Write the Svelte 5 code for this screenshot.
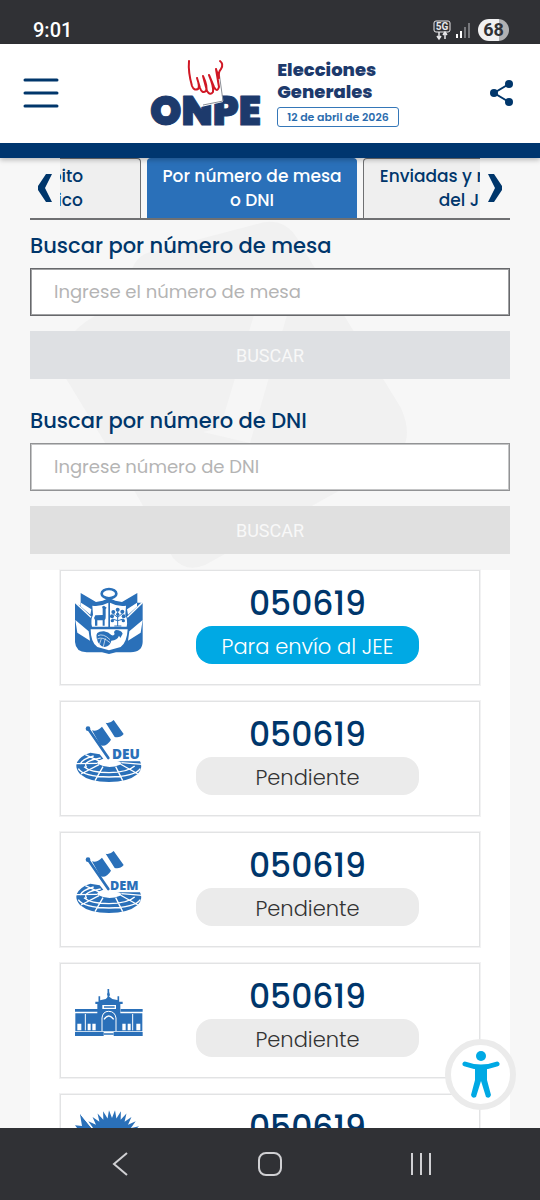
<script>
	let mesa = $state("");
	let dni = $state("");
	let scroll = $state(129);
	let active = $state(1);

	const tabs = [
		["Por ámbito", "geográfico"],
		["Por número de mesa", "o DNI"],
		["Enviadas y recibidas", "del JEE"]
	];

	const actas = [
		{ numero: "050619", estado: "Para envío al JEE", icon: "escudo", enviada: true },
		{ numero: "050619", estado: "Pendiente", icon: "DEU" },
		{ numero: "050619", estado: "Pendiente", icon: "DEM" },
		{ numero: "050619", estado: "Pendiente", icon: "congreso" },
		{ numero: "050619", estado: "Pendiente", icon: "parlamento" }
	];

	// points of the sun, as x,y pairs round a half circle
	const rays = Array.from({ length: 33 }, (_, i) => {
		const angle = Math.PI + (i * Math.PI) / 32;
		const r = i % 2 ? 92 : 68;
		return `${336 + r * Math.cos(angle)},${362 + r * Math.sin(angle)}`;
	}).join(" ");

	function move(step) {
		scroll = Math.max(0, Math.min(222, scroll + step));
	}
</script>

{#snippet escudo()}
	<svg class="emblem" viewBox="45 48 204 204" aria-hidden="true">
		<ellipse cx="147" cy="71" rx="22" ry="14" fill="none" stroke="#2a70b9" stroke-width="8" />
		<path d="M62 69 L108 96 L128 92 L147 84 L166 92 L186 96 L232 69 V98 L248 98 V216 Q247 246 212 247 H168 L147 252 L126 247 H80 Q47 246 45 216 V98 L62 108 Z" fill="#2a70b9" />
		<path d="M63 98 L94 118 L91 134 L63 110 Z M46 150 L86 184 L90 212 L52 188 Z M231 98 L201 118 L204 134 L231 110 Z M248 150 L208 184 L204 212 L242 188 Z" fill="#fff" />
		<path d="M45 97 L93 142 M248 97 L202 142" stroke="#fff" stroke-width="4" />
		<path d="M97 107 Q120 111 145 98 V170 H96 Q91 150 99 134 Z M150 98 Q174 111 198 107 L196 134 Q204 150 200 170 H150 Z M92 178 H203 Q201 218 182 231 L147 241 L112 231 Q92 218 92 178 Z" fill="#fff" />
		<path d="M126 110 L132 107 L140 113 L137 117 V142 Q137 148 134 150 V167 H128 V151 H112 V167 H105 V150 Q100 143 106 136 L128 135 V116 Z" fill="#2a70b9" />
		<path d="M173 124 V168 M173 142 L160 132 M173 142 L188 130 M173 152 L157 147 M173 152 L190 147 M163 168 H184" stroke="#2a70b9" stroke-width="3" />
		<g fill="#2a70b9">
			<circle cx="173" cy="119" r="6" /><circle cx="160" cy="126" r="6" /><circle cx="187" cy="125" r="6" />
			<circle cx="156" cy="139" r="6" /><circle cx="191" cy="139" r="6" /><circle cx="157" cy="152" r="5" />
			<circle cx="190" cy="152" r="5" /><circle cx="173" cy="133" r="5" />
			<path d="M110 205 Q104 183 132 184 Q146 186 154 195 Q161 199 164 192 Q159 184 168 180 Q184 180 188 191 L181 204 L177 197 Q172 211 154 212 Q151 228 134 231 Q115 229 110 205 Z" />
		</g>
		<path d="M114 197 Q130 189 150 209 M112 207 Q127 198 150 218 M124 206 L118 224 M136 205 L130 230" fill="none" stroke="#fff" stroke-width="2" />
	</svg>
{/snippet}

{#snippet senado(label)}
	<svg class="emblem" viewBox="45 51 204 204" aria-hidden="true">
		<path d="M85 87 L145 174" stroke="#2a70b9" stroke-width="8" stroke-linecap="round" />
		<circle cx="84" cy="86" r="7" fill="#2a70b9" />
		<path d="M96 91 Q110 96 126 80 L153 119 Q139 142 121 136 Z M137 68 Q149 72 161 60 L191 102 Q180 115 164 111 Z" fill="#2a70b9" />
		<text x={label === "DEM" ? 150 : 156} y="178" font-size={label === "DEM" ? 38 : 41}>{label}</text>
		<path d="M91 158 L119 163 L130 176 Q105 184 114 192 Q146 209 180 194 Q190 186 171 184 H240 Q250 205 233 222 Q204 246 147 246 Q88 246 60 222 Q32 189 75 164 Z" fill="#2a70b9" />
		<path d="M60 193 Q65 178 101 168 M80 202 Q65 184 122 174 M55 206 Q70 230 147 231 Q224 230 241 206 M72 200 Q91 217 147 218 Q203 217 224 198 M76 164 L120 184 M47 191 L112 190 M63 222 L117 194 M105 242 L129 200 M188 242 L167 200 M234 222 L181 192 M246 193 L184 188" fill="none" stroke="#fff" stroke-width="4" />
	</svg>
{/snippet}

{#snippet congreso()}
	<svg class="emblem" viewBox="45 27 204 204" aria-hidden="true">
		<path d="M145 57 V84 M118 79 V125 M175 79 V125" stroke="#2a70b9" stroke-width="5" />
		<path d="M141 72 L147 65 L150 76 L145 80 Z M120 91 L137 87 L146 79 L157 87 L175 91 V101 H120 Z M106 95 H188 V102 H106 Z M112 101 H181 V130 H112 Z M45 117 H112 V125 H45 Z M182 117 H248 V125 H182 Z M46 130 H247 V184 H46 Z M45 186 H248 V198 H45 Z" fill="#2a70b9" />
		<path d="M127 105 H168 V117 H127 Z M52 161 H64 V181 H52 Z M83 161 H92 V181 H83 Z M97 161 H107 V181 H97 Z M187 161 H197 V181 H187 Z M203 161 H212 V181 H203 Z M229 161 H241 V181 H229 Z M131 186 H161 V198 H131 Z" fill="#fff" />
		<path d="M132 111 H164 M131 192 H161" stroke="#2a70b9" stroke-width="4" />
		<path d="M76 132 V181 M218 132 V181 M126 183 V144 Q128 124 146 124 Q165 124 168 144 V183" fill="none" stroke="#fff" stroke-width="3" />
		<path d="M132 148 Q146 128 161 148" fill="none" stroke="#fff" stroke-width="4" />
		<path d="M134 156 Q147 142 160 156 V182 H134 Z" fill="#2a70b9" />
	</svg>
{/snippet}

{#snippet parlamento()}
	<svg class="emblem" viewBox="225 270 204 204" aria-hidden="true">
		<polygon points={rays} fill="#2a70b9" />
		<path d="M240 282 L276 326 L254 350 L226 340 L238 333 L225 316 L246 318 Z" fill="#2a70b9" />
		<path d="M244 285 L284 334" stroke="#fff" stroke-width="3" />
		<path d="M258 360 H402 L370 440 H290 Z" fill="#2a70b9" />
	</svg>
{/snippet}

<div class="phone">
	<div class="status">
		<span class="clock">9:01</span>
		<div class="signals">
			<svg width="18" height="22" viewBox="0 0 18 22" aria-hidden="true">
				<rect x="1" y="2" width="16" height="11" rx="2" fill="none" stroke="#e8e8ea" stroke-width="1" />
				<text x="9" y="11" font-size="10" text-anchor="middle">5G</text>
				<path d="M6 13 V19 M4 17 L6 20 L8 17 M12 20 V14 M10 16 L12 13 L14 16" fill="none" stroke="#e8e8ea" stroke-width="1.5" />
			</svg>
			<svg width="15" height="16" viewBox="0 0 15 16" aria-hidden="true">
				<path d="M1 12 V16 M5 9 V16" stroke="#fff" stroke-width="2" />
				<path d="M9 5 V16 M13 1 V16" stroke="#77787c" stroke-width="2" />
			</svg>
			<span class="battery">68</span>
		</div>
	</div>

	<header>
		<button class="plain" aria-label="Menú">
			<svg width="36" height="30" viewBox="0 0 36 30">
				<path d="M2 2 H34 M2 15 H34 M2 28 H34" stroke="#00366b" stroke-width="3" stroke-linecap="round" />
			</svg>
		</button>
		<div class="brand">
			<svg width="112" height="70" viewBox="0 0 112 70" role="img" aria-label="ONPE">
				<text class="onpe" x="0" y="67" font-size="40">ONPE</text>
				<path d="M47 30 L68 13 L73 44 L51 49 L49 38 Z" fill="#fff" />
				<path d="M69 14 L73 43 L53 47" fill="none" stroke="#8c8f96" stroke-width="1" />
				<path d="M39 3 Q38 14 42 28 Q44 33 48 31 Q50 29 47 20 L50 30 Q52 36 56 33 Q58 29 53 18 L57 33 Q60 38 63 34 Q64 29 59 17 L64 29 Q67 35 69 29 L66 11 L69 20 Q68 14 71 11 Q74 6 70 3" fill="#fff" stroke="#d01825" stroke-width="2" stroke-linecap="round" stroke-linejoin="round" />
			</svg>
			<div class="event">
				<span class="title">Elecciones<br />Generales</span>
				<span class="date">12 de abril de 2026</span>
			</div>
		</div>
		<button class="plain" aria-label="Compartir">
			<svg width="24" height="26" viewBox="0 0 24 26">
				<path d="M19 4 L4 13 L19 22" fill="none" stroke="#00366b" stroke-width="2" />
				<g fill="#00366b"><circle cx="19" cy="4" r="4" /><circle cx="4" cy="13" r="4" /><circle cx="19" cy="22" r="4" /></g>
			</svg>
		</button>
	</header>

	<main>
		<svg class="watermark" width="360" height="360" viewBox="55 215 360 360" aria-hidden="true">
			<path d="M147 253 L257 224 Q283 216 297 238 L313 265 L401 408 Q413 436 401 450 L337 492 L205 565 Q186 573 173 558 L135 492 L62 372 Q55 340 93 317 L118 303 L133 267 Q137 257 147 253 Z" fill="#f1f1f1" />
			<path d="M254 315 H287 L250 443 L203 432 L220 428 Z" fill="#f6f6f6" />
		</svg>

		<nav class="carousel">
			<button class="arrow" aria-label="Anterior" onclick={() => move(-111)}>
				<svg width="14" height="28" viewBox="0 0 14 28"><path d="M8 0 H14 L7 14 L14 28 H8 L0 16 V12 Z" fill="#00366b" /></svg>
			</button>
			<div class="window">
				<div class="tabs" style:transform="translateX({-scroll}px)">
					{#each tabs as tab, i}
						<button class="tab" class:active={active === i} onclick={() => (active = i)}>{tab[0]}<br />{tab[1]}</button>
					{/each}
				</div>
			</div>
			<button class="arrow" aria-label="Siguiente" onclick={() => move(111)}>
				<svg width="14" height="28" viewBox="0 0 14 28"><path d="M6 0 H0 L7 14 L0 28 H6 L14 16 V12 Z" fill="#00366b" /></svg>
			</button>
		</nav>

		<form onsubmit={(e) => e.preventDefault()}>
			<label for="mesa">Buscar por número de mesa</label>
			<input id="mesa" class="focus" placeholder="Ingrese el número de mesa" bind:value={mesa} />
			<button class="search blue">BUSCAR</button>
		</form>
		<form onsubmit={(e) => e.preventDefault()}>
			<label for="dni">Buscar por número de DNI</label>
			<input id="dni" placeholder="Ingrese número de DNI" bind:value={dni} />
			<button class="search">BUSCAR</button>
		</form>

		<section class="results">
			{#each actas as acta}
				<article>
					{#if acta.icon === "escudo"}
						{@render escudo()}
					{:else if acta.icon === "congreso"}
						{@render congreso()}
					{:else if acta.icon === "parlamento"}
						{@render parlamento()}
					{:else}
						{@render senado(acta.icon)}
					{/if}
					<div class="info">
						<span class="numero">{acta.numero}</span>
						<span class="estado" class:enviada={acta.enviada}>{acta.estado}</span>
					</div>
				</article>
			{/each}
		</section>

		<button class="access" aria-label="Accesibilidad">
			<svg width="38" height="48" viewBox="0 0 38 48">
				<circle cx="19" cy="5" r="5" fill="#00a9e4" />
				<path d="M3 13 Q19 19 35 13" fill="none" stroke="#00a9e4" stroke-width="5" stroke-linecap="round" />
				<path d="M13 15 H25 V29 L29 44 Q28 48 24 46 L19 30 L14 46 Q10 48 9 44 L13 29 Z" fill="#00a9e4" />
			</svg>
		</button>
	</main>

	<div class="system">
		<button class="plain" aria-label="Atrás">
			<svg width="24" height="26" viewBox="0 0 24 26"><path d="M19 2 L6 13 L19 24" fill="none" stroke="#d0d0d3" stroke-width="2" /></svg>
		</button>
		<button class="plain" aria-label="Inicio">
			<svg width="26" height="26" viewBox="0 0 26 26"><rect x="2" y="2" width="22" height="22" rx="7" fill="none" stroke="#d0d0d3" stroke-width="2" /></svg>
		</button>
		<button class="plain" aria-label="Recientes">
			<svg width="26" height="26" viewBox="0 0 26 26"><path d="M5 2 V24 M14 2 V24 M23 2 V24" stroke="#d0d0d3" stroke-width="2" /></svg>
		</button>
	</div>
</div>

<style>
	:global(body) {
		margin: 0;
	}

	.phone {
		display: flex;
		flex-direction: column;
		height: 100vh;
		font-family: Poppins, Inter, sans-serif;
		color: #00366b;
		background-color: #f7f7f7;
	}

	button {
		font-family: inherit;
		border: none;
		border-radius: 0;
		padding: 0;
		cursor: pointer;
	}

	svg {
		display: block;
	}

	.plain {
		display: flex;
		background: none;
	}

	.status {
		box-sizing: border-box;
		flex: none;
		display: flex;
		justify-content: space-between;
		align-items: center;
		height: 44px;
		padding: 16px 31px 0 33px;
		background-color: #303135;
		color: #fff;
		font-family: Roboto, sans-serif;
	}

	.clock {
		font-size: 20px;
		font-weight: 500;
	}

	.signals {
		display: flex;
		align-items: center;
		gap: 5px;
	}

	.signals text {
		fill: #e8e8ea;
		font-weight: 700;
	}

	.battery {
		width: 31px;
		margin-left: 2px;
		border-radius: 11px;
		background: linear-gradient(90deg, #f1f1f2 68%, #b0b0b2 68%);
		color: #303135;
		font-size: 18px;
		line-height: 22px;
		font-weight: 700;
		text-align: center;
	}

	header {
		position: relative;
		z-index: 1;
		flex: none;
		display: flex;
		justify-content: space-between;
		align-items: center;
		height: 97px;
		padding: 0 26px 2px 23px;
		background-color: #fff;
		border-bottom: 15px solid #00366f;
		box-shadow: 0 2px 5px rgba(0, 0, 0, 0.25);
	}

	.brand {
		display: flex;
		align-items: center;
		gap: 15px;
	}

	.onpe {
		fill: #1d3a6c;
		stroke: #1d3a6c;
		stroke-width: 1px;
		stroke-linejoin: round;
		font-weight: 900;
	}

	.event {
		display: flex;
		flex-direction: column;
		gap: 4px;
	}

	.title {
		font-size: 18px;
		line-height: 22px;
		font-weight: 800;
		color: #1d3a6c;
	}

	.date {
		border: 1px solid #3577b8;
		border-radius: 3px;
		padding: 0 9px;
		font-size: 11px;
		line-height: 18px;
		font-weight: 600;
		color: #2b6cae;
	}

	main {
		position: relative;
		flex: 1;
		min-height: 0;
		overflow: hidden;
		padding: 0 30px;
	}

	.watermark {
		position: absolute;
		left: 55px;
		top: 57px;
	}

	.carousel {
		position: relative;
		display: flex;
		border-bottom: 2px solid #6f7072;
	}

	.arrow {
		flex: none;
		display: flex;
		align-items: center;
		justify-content: center;
		width: 30px;
		background-color: #f7f7f7;
	}

	.window {
		flex: 1;
		min-width: 0;
		overflow: hidden;
	}

	.tabs {
		display: flex;
		gap: 6px;
	}

	.tab {
		box-sizing: border-box;
		flex: none;
		width: 210px;
		height: 60px;
		padding-bottom: 2px;
		border: 1px solid #6f7072;
		border-bottom: none;
		border-radius: 4px 4px 0 0;
		background-color: #efefef;
		color: #00366b;
		font-size: 17px;
		line-height: 24px;
		font-weight: 500;
		white-space: nowrap;
	}

	.tab.active {
		border-color: #2a70b9;
		background-color: #2a70b9;
		color: #fff;
	}

	form {
		position: relative;
		display: flex;
		flex-direction: column;
	}

	label {
		padding: 10px 0 6px;
		font-size: 21px;
		line-height: 32px;
		font-weight: 500;
	}

	form + form {
		margin-top: 16px;
	}

	input {
		box-sizing: border-box;
		width: 100%;
		height: 48px;
		border: 1px solid #929395;
		outline: 1px solid #c4c5c6;
		outline-offset: -2px;
		border-radius: 0;
		padding: 0 23px 2px;
		background-color: #fff;
		font-family: inherit;
		font-size: 18px;
		font-weight: 400;
	}

	input.focus {
		border-color: #67686b;
		outline-color: #a0a1a3;
	}

	input::placeholder {
		color: #b4b4b4;
		opacity: 1;
	}

	.search {
		height: 48px;
		margin-top: 15px;
		background-color: #e0e0e0;
		color: #f8f8f8;
		font-family: Roboto, sans-serif;
		font-size: 18px;
	}

	.search.blue {
		background-color: #dee0e3;
	}

	.results {
		position: relative;
		display: flex;
		flex-direction: column;
		gap: 16px;
		margin-top: 16px;
		padding: 0 30px 30px;
		background-color: #fff;
	}

	article {
		box-sizing: border-box;
		display: flex;
		gap: 7px;
		height: 115px;
		padding: 15px 14px 0;
		border: 1px solid #e2e3e4;
		outline: 1px solid #f2f2f3;
	}

	.emblem {
		flex: none;
		width: 68px;
		height: 68px;
	}

	.emblem text {
		fill: #2a70b9;
		font-family: "Open Sans", sans-serif;
		font-weight: 800;
	}

	.info {
		flex: 1;
		display: flex;
		flex-direction: column;
		align-items: center;
	}

	.numero {
		font-size: 33px;
		line-height: 36px;
		font-weight: 500;
		padding-bottom: 4px;
	}

	.estado {
		width: 71%;
		padding-top: 3px;
		border-radius: 16px;
		background-color: #ebebeb;
		color: #333;
		font-size: 21px;
		line-height: 35px;
		font-weight: 300;
		text-align: center;
	}

	.estado.enviada {
		background-color: #00a9e4;
		color: #fff;
	}

	.access {
		position: absolute;
		right: 24px;
		bottom: 18px;
		display: flex;
		align-items: center;
		justify-content: center;
		width: 71px;
		height: 71px;
		border: 6px solid #ebebeb;
		border-radius: 50%;
		background-color: #fff;
	}

	.system {
		position: relative;
		flex: none;
		display: grid;
		grid-template-columns: repeat(3, 1fr);
		justify-items: center;
		align-items: center;
		height: 72px;
		padding: 0 45px;
		background-color: #303135;
	}
</style>
